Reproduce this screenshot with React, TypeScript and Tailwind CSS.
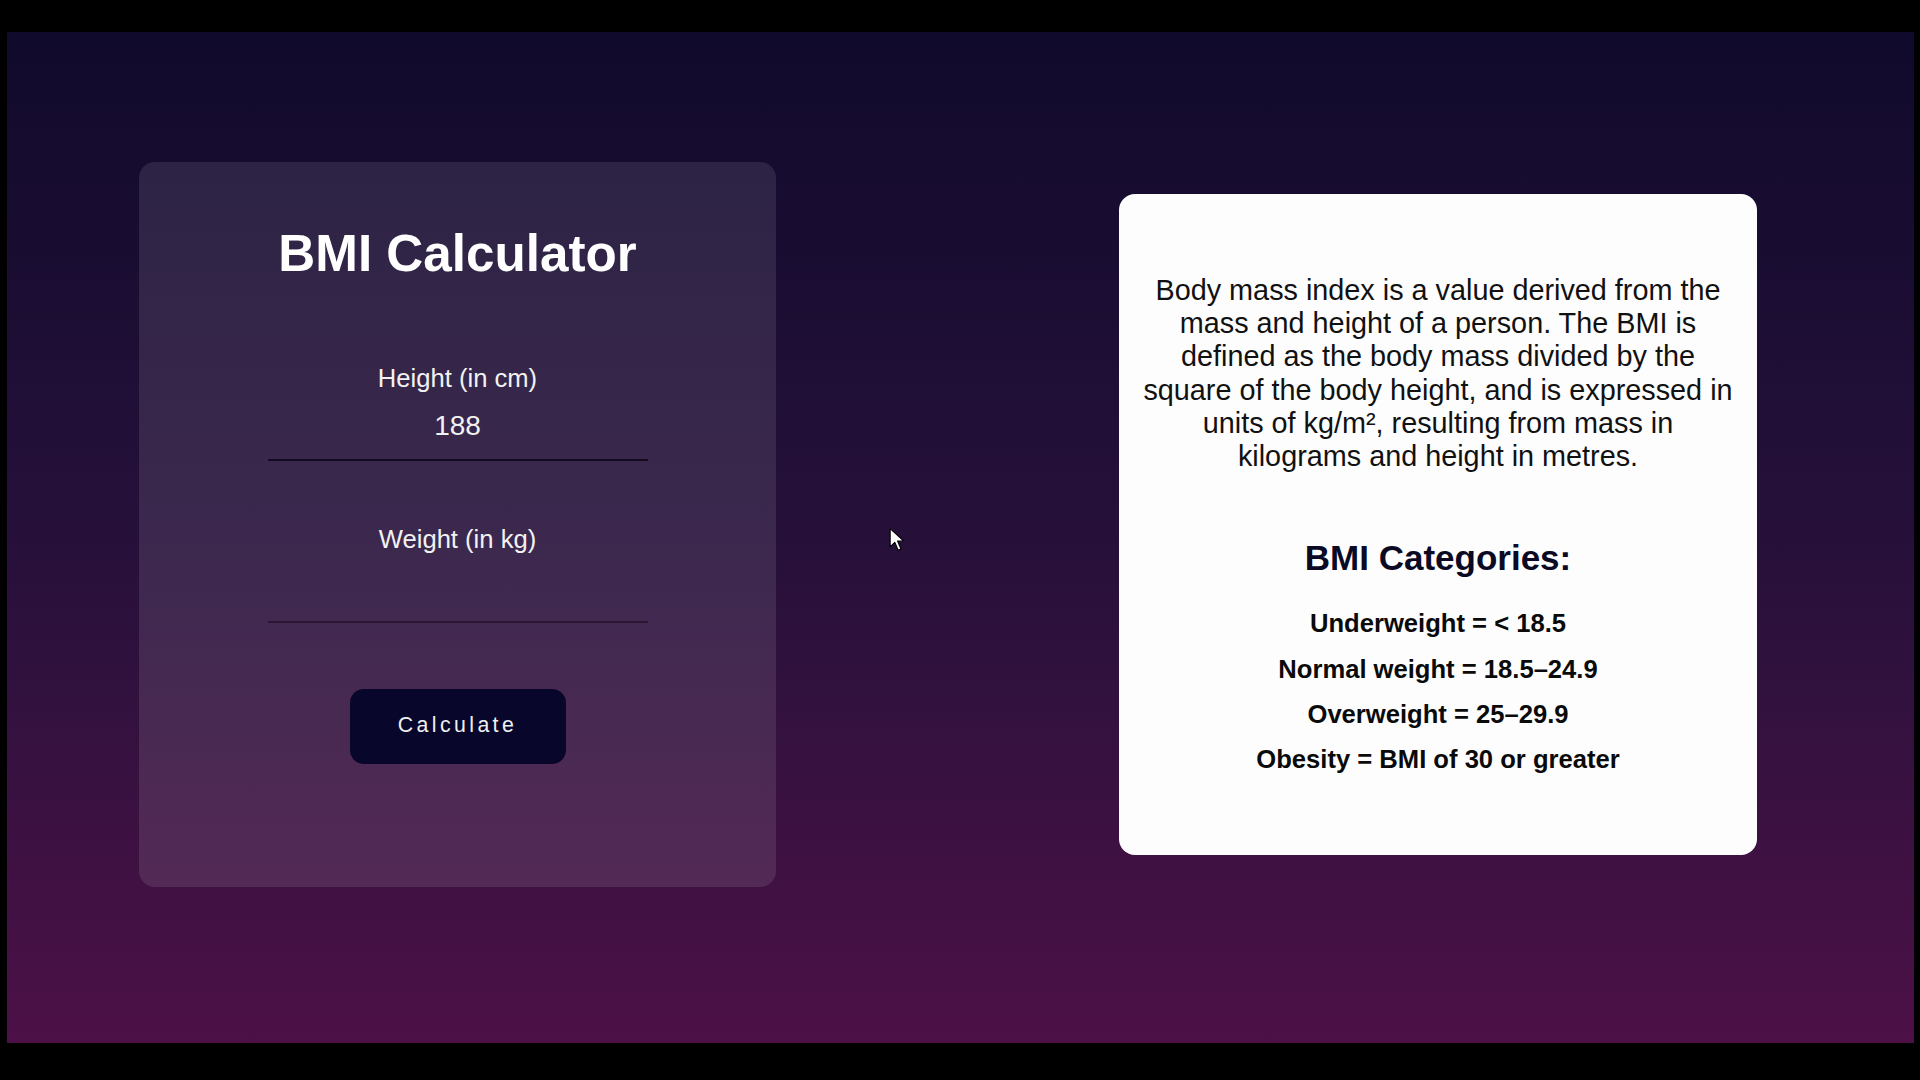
import React, { useState } from 'react';

const categories = [
  'Underweight = < 18.5',
  'Normal weight = 18.5–24.9',
  'Overweight = 25–29.9',
  'Obesity = BMI of 30 or greater',
];

const Cursor = () => (
  <svg
    className="absolute left-[882px] top-[495px]"
    width="16"
    height="26"
    viewBox="0 0 14 22"
  >
    <path
      d="M1 1 L1 17 L5 13 L8 20 L10.5 19 L7.5 12 L13 12 Z"
      fill="#ffffff"
      stroke="#000000"
      strokeWidth="1"
      strokeLinejoin="round"
    />
  </svg>
);

export default function App() {
  const [height, setHeight] = useState('188');
  const [weight, setWeight] = useState('');

  return (
    <div
      className="min-h-screen w-full bg-black pt-[32px] pb-[37px] pl-[7px] pr-[6px]"
      style={{ fontFamily: '"Liberation Sans", Arial, sans-serif' }}
    >
      <div className="relative flex h-[1011px] items-center bg-gradient-to-b from-[#100a2c] via-[#26103a] to-[#4c1046] pl-[132px] pb-[26px]">
        {/* calculator */}
        <div className="flex h-[725px] w-[637px] flex-col items-center rounded-[16px] bg-white/10 pt-[63px]">
          <h1 className="text-[51.2px] font-bold leading-[1.15] text-white">BMI Calculator</h1>

          <label className="mt-[80px] text-[25.6px] leading-[1.15] text-[#f2f2f2]">Height (in cm)</label>
          <input
            value={height}
            onChange={(e) => setHeight(e.target.value)}
            className="h-[68px] w-[380px] border-b-2 border-[#130a22] bg-transparent text-center text-[28px] text-[#f2f2f2] outline-none"
          />

          <label className="mt-[64px] text-[25.6px] leading-[1.15] text-[#f2f2f2]">Weight (in kg)</label>
          <input
            value={weight}
            onChange={(e) => setWeight(e.target.value)}
            className="h-[68px] w-[380px] border-b-2 border-[#2a1632] bg-transparent text-center text-[28px] text-[#f2f2f2] outline-none"
          />

          <button className="mt-[66px] h-[75px] w-[216px] rounded-[14px] bg-[#08072b] text-[21.3px] tracking-[3.4px] text-[#f0f0f0]">
            Calculate
          </button>
        </div>

        {/* info */}
        <div className="ml-[343px] flex w-[638px] flex-col items-center rounded-[16px] bg-[#fdfdfd] px-[24px] pt-[80px] pb-[80px] text-center">
          <p className="text-[28.8px] leading-[1.15] text-[#111111]">
            Body mass index is a value derived from the mass and height of a person. The BMI is defined as the body
            mass divided by the square of the body height, and is expressed in units of kg/m², resulting from mass in
            kilograms and height in metres.
          </p>
          <h2 className="mt-[65px] text-[35px] font-bold leading-[1.15] text-[#0b0a24]">BMI Categories:</h2>
          <div className="mt-[31px] flex flex-col items-center gap-[16px]">
            {categories.map((c) => (
              <p key={c} className="text-[25.6px] font-bold leading-[1.15] text-[#0a0a0a]">
                {c}
              </p>
            ))}
          </div>
        </div>

        <Cursor />
      </div>
    </div>
  );
}
